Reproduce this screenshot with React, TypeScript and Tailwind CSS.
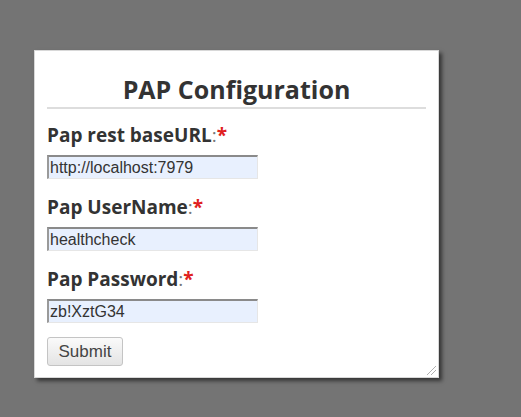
import React from "react";

const sans = { fontFamily: '"Open Sans", sans-serif' };

function Field({ label, value }: { label: string; value: string }) {
  return (
    <div className="flex flex-col">
      <label className="text-[19px] leading-[24px] font-bold text-[#333]" style={sans}>
        {label}
        <span className="font-normal text-[#777]">:</span>
        <span className="text-[#e02020]">*</span>
      </label>
      <input
        type="text"
        defaultValue={value}
        className="mt-[8px] h-[24px] w-[211px] border-t-2 border-l-2 border-r border-b border-t-[#8a8a8a] border-l-[#9a9a9a] border-r-[#e6e6e6] border-b-[#e6e6e6] bg-[#e8f0fe] px-[1px] text-[16px] text-[#333] outline-none font-['Liberation_Sans',Arial,sans-serif]"
      />
    </div>
  );
}

export default function App() {
  return (
    <div className="min-h-[417px] w-[521px] bg-[#747474] pl-[34px] pt-[50px]">
      <div className="relative w-[405px] h-[328px] border border-[#d8d8d8] bg-white px-[12px] shadow-[3px_3px_4px_rgba(0,0,0,0.55)]">
        <h1
          className="pt-[23px] text-center text-[25px] leading-[30px] font-bold text-[#333]"
          style={sans}
        >
          PAP Configuration
        </h1>
        <div className="mt-[3px] h-[2px] bg-[#dddddd]" />
        <form className="mt-[14px] flex flex-col gap-[16px]" onSubmit={(e) => e.preventDefault()}>
          <Field label="Pap rest baseURL" value="http://localhost:7979" />
          <Field label="Pap UserName" value="healthcheck" />
          <Field label="Pap Password" value="zb!XztG34" />
          <div className="-mt-[2px]">
            <button
              type="submit"
              className="h-[29px] w-[76px] rounded-[3px] border border-[#c4c4c4] bg-gradient-to-b from-[#fafafa] to-[#e4e4e4] text-[17px] text-[#444] font-['Liberation_Sans',Arial,sans-serif]"
            >
              Submit
            </button>
          </div>
        </form>
        <svg
          className="absolute bottom-[1px] right-[1px]"
          width="12"
          height="12"
          viewBox="0 0 12 12"
        >
          <line x1="2" y1="11" x2="11" y2="2" stroke="#b0b0b0" strokeWidth="1" />
          <line x1="6" y1="11" x2="11" y2="6" stroke="#b0b0b0" strokeWidth="1" />
        </svg>
      </div>
    </div>
  );
}
